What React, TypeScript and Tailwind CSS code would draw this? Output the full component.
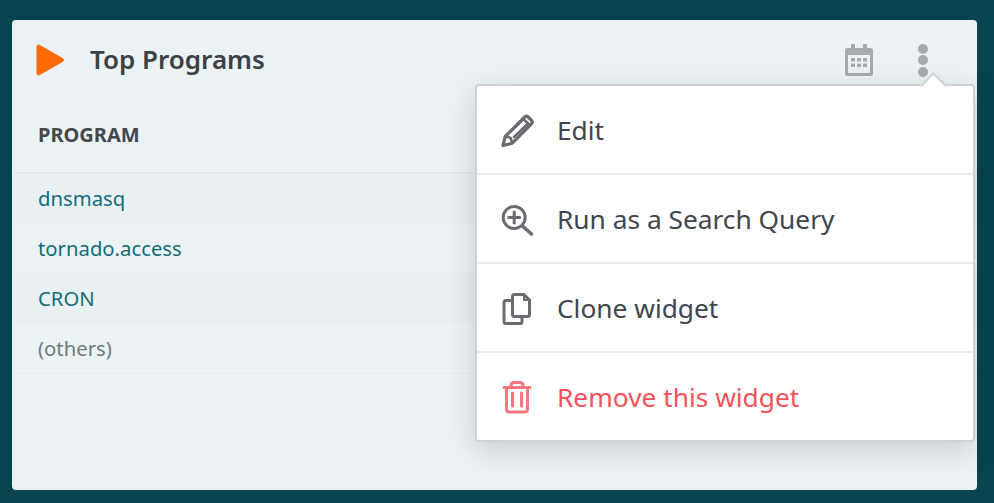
import React from "react";

const programs = [
	{ name: "dnsmasq", bg: "bg-[#e9f1f4]", color: "text-[#156c78]" },
	{ name: "tornado.access", bg: "bg-[#ecf3f5]", color: "text-[#156c78]" },
	{ name: "CRON", bg: "bg-[#eaf1f3]", color: "text-[#156c78]" },
	{ name: "(others)", bg: "bg-[#ecf3f5]", color: "text-[#6f7a80]" },
];

const PencilIcon = () => (
	<svg width="36" height="36" viewBox="0 0 36 36" fill="none" stroke="#696d72" strokeWidth="3.200" strokeLinejoin="round" strokeLinecap="round">
		<path d="M4 33.500l2.200-9L25.500 5.200c1.300-1.300 2.500-1.300 3.700-.2l3.300 3.300c1.100 1.200 1.100 2.400-.2 3.700L13 31.300z" />
		<path d="M7 24.500l3.500 1 1 .5 1.500 4.500" strokeWidth="2.600" />
		<path d="M11 20L24 7.500M15 25l13-12.500" strokeWidth="2.600" />
		<path d="M24.500 7l5.500 5.500" strokeWidth="2.600" />
	</svg>
);

const ZoomIcon = () => (
	<svg width="36" height="36" viewBox="0 0 36 36" fill="none" stroke="#696d72" strokeWidth="3" strokeLinecap="round">
		<circle cx="15.200" cy="16.500" r="11" />
		<path d="M15.200 11v11M9.700 16.500h11" />
		<path d="M24 25.500l8.500 7.500" strokeWidth="3.500" />
	</svg>
);

const CopyIcon = () => (
	<svg width="36" height="36" viewBox="0 0 36 36" fill="none" stroke="#696d72" strokeWidth="3" strokeLinejoin="round">
		<path d="M15.500 4.500H25l5.500 5.500v14.500c0 1.300-.8 2-2 2h-13c-1.200 0-2-.7-2-2v-18c0-1.300.8-2 2-2z" />
		<path d="M25 4.500v5.500h5.500" strokeWidth="2" />
		<path d="M13.500 10.500H7c-1.200 0-2 .8-2 2v19c0 1.200.8 2 2 2h14c1.200 0 2-.8 2-2v-5" />
	</svg>
);

const TrashIcon = () => (
	<svg width="36" height="36" viewBox="0 0 36 36" fill="none" stroke="#f4777c" strokeWidth="3" strokeLinecap="round" strokeLinejoin="round">
		<path d="M5 8.500h26" />
		<path d="M12 8.500V6.500c0-2 1.500-3 3-3h6c1.500 0 3 1 3 3v2" />
		<path d="M7.500 8.500v21.500c0 2 1 3 3 3h15c2 0 3-1 3-3V8.500" />
		<path d="M13.500 14v13M22.500 14v13" />
	</svg>
);

const menu = [
	{ label: "Edit", icon: <PencilIcon />, color: "text-[#41464d]", h: "h-[89px]" },
	{ label: "Run as a Search Query", icon: <ZoomIcon />, color: "text-[#41464d]", h: "h-[89px]" },
	{ label: "Clone widget", icon: <CopyIcon />, color: "text-[#41464d]", h: "h-[89px]" },
	{ label: "Remove this widget", icon: <TrashIcon />, color: "text-[#f2525a]", h: "h-[87px]" },
];

const App = () => {
	return (
		<div className="h-[503px] bg-[#07444f] pt-5 pl-3 pr-[17px] pb-[13px] font-['Noto_Sans',sans-serif] overflow-hidden">
			<div className="relative h-full rounded bg-[#ecf3f5]">
				<div className="flex h-20 items-center pl-6 pr-[49px]">
					<svg width="30" height="34" viewBox="0 0 30 34" className="shrink-0 mr-[24px] -translate-x-[1px]">
						<path d="M2 3.500c0-1.500 1.200-2 2.400-1.300L27.500 15.500c1.300.8 1.300 2.200 0 3L4.400 31.800C3.200 32.500 2 32 2 30.500z" fill="#ff6a07" stroke="#ff6a07" strokeWidth="1" />
					</svg>
					<h2 className="text-[26px] font-semibold text-[#3c4146] leading-none -translate-y-[1px]">Top Programs</h2>
					<div className="ml-auto flex items-center gap-[44px]">
						<svg width="30" height="34" viewBox="0 0 30 34" fill="#a5abad">
							<path d="M7 1h4v5H7zM19 1h4v5h-4z" />
							<path fillRule="evenodd" d="M3 5h24a2 2 0 0 1 2 2v24a2 2 0 0 1-2 2H3a2 2 0 0 1-2-2V7a2 2 0 0 1 2-2zm1 7v18h22V12z" />
							<path d="M7 15h4v3.500H7zM13 15h4v3.500h-4zM19 15h4v3.500h-4zM7 20.500h4V24H7zM13 20.500h4V24h-4zM19 20.500h4V24h-4z" />
						</svg>
						<div className="flex flex-col gap-[1.500px]">
							<span className="size-[10px] rounded-full bg-[#a5abad]" />
							<span className="size-[10px] rounded-full bg-[#a5abad]" />
							<span className="size-[10px] rounded-full bg-[#a5abad]" />
						</div>
					</div>
				</div>

				<div className="ml-[2px]">
					<div className="flex h-[74px] items-center border-b-2 border-[#e1e8ec] pl-6 pb-[2px]">
						<span className="text-[20px] font-bold text-[#44484b]">PROGRAM</span>
					</div>
					{programs.map((p) => (
						<div key={p.name} className={`flex h-[50px] items-center border-b-2 border-[#e8eef1] pl-6 text-[20.300px] ${p.bg} ${p.color}`}>
							{p.name}
						</div>
					))}
				</div>

				{/* dropdown */}
				<div className="absolute left-[463px] top-[64px] w-[500px] rounded border-2 border-[#cbd3d5] bg-white shadow-[0_8px_30px_rgba(0,0,0,0.16)]">
					<div className="absolute right-[30px] -top-[10px] size-[19px] rotate-45 border-l-2 border-t-2 border-[#cbd3d5] bg-white" />
					{menu.map((m, i) => (
						<div key={m.label} className={`relative flex items-center pl-[22px] text-[26.300px] ${m.h} ${m.color} ${i < 3 ? "border-b-2 border-[#e6ebee]" : ""}`}>
							<span className="mr-[22px] flex w-[36px] shrink-0 justify-center">{m.icon}</span>
							<span className="translate-y-[1px]">{m.label}</span>
						</div>
					))}
				</div>
			</div>
		</div>
	);
};

export default App;
